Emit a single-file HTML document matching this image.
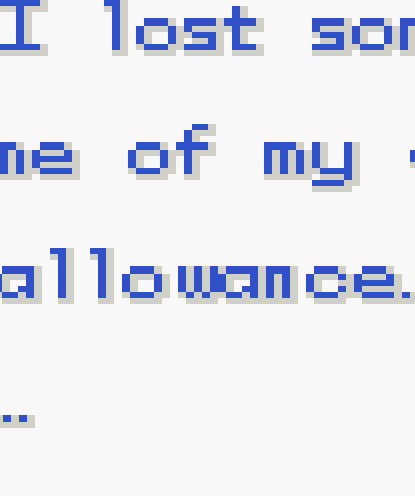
<!DOCTYPE html>
<html><head><meta charset="utf-8">
<style>
html,body{margin:0;padding:0;background:#f8f8f8;width:415px;height:496px;overflow:hidden}
svg{display:block}
</style></head>
<body>
<svg id="s" width="415" height="496" xmlns="http://www.w3.org/2000/svg">
<title>I lost some of my allowance...</title>
<rect width="415" height="496" fill="#f8f8f8"/>
<g id="sh" fill="#d0d0c8"></g>
<g id="bl" fill="#3050c8"></g>
</svg>
<script>
var R={A1:[-50,6],A2:[-44,6],A3:[-38,6],X1:[-32,8],X2:[-24,6],X3:[-18,6],X4:[-12,6],X5:[-6,6],D1:[0,6],D2:[6,6]};
var G={
I:{A1:"#####",A2:"..#..",A3:"..#..",X1:"..#..",X2:"..#..",X3:"..#..",X4:"..#..",X5:"#####"},
l:{A1:"##",A2:".#",A3:".#",X1:".#",X2:".#",X3:".#",X4:".#",X5:".#"},
o:{X1:".###.",X2:"#...#",X3:"#...#",X4:"#...#",X5:".###."},
s:{X1:"####",X2:"#...",X3:".###",X4:"...#",X5:"####"},
t:{A2:".#..",A3:".#..",X1:"####",X2:".#..",X3:".#..",X4:".#..",X5:".###"},
m:{X1:"####.",X2:"#.#.#",X3:"#.#.#",X4:"#.#.#",X5:"#.#.#"},
e:{X1:".###.",X2:"#...#",X3:"#####",X4:"#....",X5:".####"},
f:{A1:"..##",A2:".#..",A3:".#..",X1:"####",X2:".#..",X3:".#..",X4:".#..",X5:".#.."},
y:{X1:"#...#",X2:"#...#",X3:"#...#",X4:"#...#",X5:".####",D1:"....#",D2:"####."},
a:{X1:".####",X2:"#...#",X3:"#...#",X4:"#..##",X5:".##.#"},
w:{X1:"#.#.#",X2:"#.#.#",X3:"#.#.#",X4:"#.#.#",X5:".#.#."},
n:{X1:"###",X2:"#.#",X3:"#.#",X4:"#.#",X5:"#.#"},
c:{X1:".###.",X2:"#...#",X3:"#....",X4:"#...#",X5:".###."},
p:{X5:"#"},
k:{X2:"#",X3:"#"}
};
var rects=[];
function put(ch,x,B){var g=G[ch];for(var r in g){var row=g[r],yy=B+R[r][0],h=R[r][1];for(var i=0;i<row.length;i++){if(row[i]=="#")rects.push([x+i*8,yy,8,h]);}}}
var L=[
[50,[["I",0],["l",104],["o",136],["s",184],["t",224],["s",312],["o",352],["m",400]]],
[174,[["m",-16],["e",32],["o",128],["f",176],["m",264],["y",312],["k",410]]],
[298,[["a",-6],["l",50],["l",90],["o",122],["w",178],["a",218],["n",266],["c",306],["e",354],["p",402]]]
];
L.forEach(function(l){l[1].forEach(function(c){put(c[0],c[1],l[0]);});});
[-13,3,19].forEach(function(x){rects.push([x,415,8,7]);});
var NS="http://www.w3.org/2000/svg",sh=document.getElementById("sh"),bl=document.getElementById("bl");
function mk(p,x,y,w,h){var e=document.createElementNS(NS,"rect");e.setAttribute("x",x);e.setAttribute("y",y);e.setAttribute("width",w);e.setAttribute("height",h);p.appendChild(e);}
rects.forEach(function(r){mk(sh,r[0]+8,r[1],r[2],r[3]);mk(sh,r[0],r[1]+6,r[2],r[3]);mk(sh,r[0]+8,r[1]+6,r[2],r[3]);});
rects.forEach(function(r){mk(bl,r[0],r[1],r[2],r[3]);});
</script>
</body></html>
